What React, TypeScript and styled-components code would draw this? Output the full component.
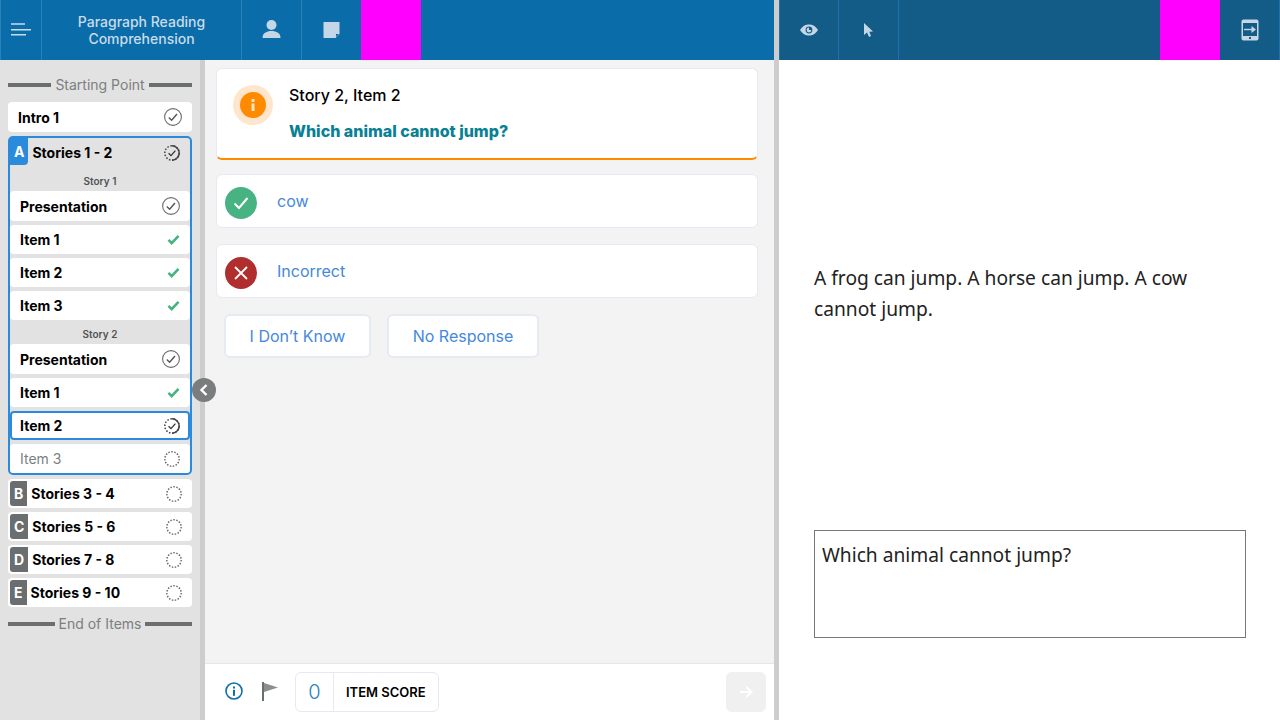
import type { FC, ReactNode } from 'react';
import styled, { createGlobalStyle } from 'styled-components';

const GlobalStyle = createGlobalStyle`
    html, body {
        margin: 0;
        padding: 0;
    }

    body {
        font-family: Inter, "Liberation Sans", sans-serif;
        background: #fff;
    }

    * {
        box-sizing: border-box;
    }
`;

type StatusKind = 'done' | 'check' | 'progress' | 'empty';

const StatusIcon: FC<{ kind: StatusKind }> = ({ kind }) => {
    if (kind === 'check') {
        return (
            <svg width="13" height="11" viewBox="0 0 14 12">
                <path d="M1.5 6.5 L5 10 L12.5 2" fill="none" stroke="#45b380" strokeWidth="2.8" />
            </svg>
        );
    }
    if (kind === 'done') {
        return (
            <svg width="18" height="18" viewBox="0 0 18 18">
                <circle cx="9" cy="9" r="8.4" fill="none" stroke="#6b6e6e" strokeWidth="1.1" />
                <path d="M4.8 9.6 L7.6 12.2 L13 6" fill="none" stroke="#555" strokeWidth="1.4" />
            </svg>
        );
    }
    if (kind === 'progress') {
        return (
            <svg width="16" height="16" viewBox="0 0 16 16">
                <circle cx="8" cy="8" r="7.2" fill="none" stroke="#444" strokeWidth="1.5" strokeDasharray="1.6 1.6" />
                <path d="M8 0.8 A7.2 7.2 0 0 1 8 15.2" fill="none" stroke="#444" strokeWidth="1.5" />
                <path d="M4.6 8.2 L7 10.6 L11.4 5.6" fill="none" stroke="#333" strokeWidth="1.3" />
            </svg>
        );
    }
    return (
        <svg width="16" height="16" viewBox="0 0 16 16">
            <circle cx="8" cy="8" r="7.2" fill="none" stroke="#6b6e6e" strokeWidth="1.5" strokeDasharray="1.5 1.5" />
        </svg>
    );
};

const Page = styled.div`
    display: grid;
    grid-template-columns: 774px 5px 501px;
    width: 1280px;
    height: 720px;
    overflow: hidden;
`;

const LeftPane = styled.div`
    display: flex;
    flex-direction: column;
    height: 720px;
`;

const PaneDivider = styled.div`
    background: #cdcdcd;
`;

const RightPane = styled.div`
    display: flex;
    flex-direction: column;
    height: 720px;
`;

const TopBar = styled.header<{ $dark?: boolean }>`
    display: flex;
    flex: 0 0 60px;
    height: 60px;
    background: ${({ $dark }) => ($dark ? '#135c87' : '#0a6ca8')};
    color: #c5d7e6;
`;

const BarCell = styled.div<{ $width: number; $line: string; $end?: boolean }>`
    display: flex;
    flex: 0 0 ${({ $width }) => $width}px;
    align-items: center;
    justify-content: center;
    border-${({ $end }) => ($end ? 'right' : 'left')}: 1px solid ${({ $line }) => $line};
`;

const BarTitle = styled(BarCell)`
    font-size: 14px;
    font-weight: 500;
    line-height: 17px;
    text-align: center;
    color: #c9dcea;
`;

const Masked = styled.div<{ $width: number }>`
    flex: 0 0 ${({ $width }) => $width}px;
    background: #ff00ff;
`;

const BarSpacer = styled.div`
    flex: 1;
`;

const Body = styled.div`
    position: relative;
    display: grid;
    flex: 1;
    grid-template-columns: 200px 5px 569px;
    min-height: 0;
`;

const Sidebar = styled.nav`
    display: flex;
    flex-direction: column;
    gap: 4px;
    padding: 16px 8px 0;
    background: #e2e2e2;
`;

const Splitter = styled.div`
    background: #cdcdcd;
`;

const Collapse = styled.button`
    position: absolute;
    top: 318px;
    left: 192px;
    display: flex;
    align-items: center;
    justify-content: center;
    width: 24px;
    height: 24px;
    padding: 0;
    border: 0;
    border-radius: 50%;
    background: #7a7d7d;
`;

const Marker = styled.div<{ $spaced?: boolean }>`
    display: flex;
    align-items: center;
    gap: 4px;
    height: 17px;
    margin-bottom: ${({ $spaced }) => ($spaced ? '5px' : '0')};
    margin-top: ${({ $spaced }) => ($spaced ? '0' : '4px')};
    font-size: 14px;
    line-height: 17px;
    white-space: nowrap;
    color: #7b7f80;

    &::before,
    &::after {
        content: '';
        flex: 1;
        height: 4px;
        background: #6b6e6e;
    }
`;

const Row = styled.div<{ $selected?: boolean; $height?: number }>`
    display: flex;
    flex: 0 0 ${({ $height }) => $height ?? 29}px;
    align-items: center;
    justify-content: space-between;
    padding: 0 ${({ $selected }) => ($selected ? '8px' : '10px')};
    border: ${({ $selected }) => ($selected ? '2px solid #2a8adb' : '0')};
    border-radius: 4px;
    background: #fff;
`;

const RowLabel = styled.span<{ $muted?: boolean }>`
    font-size: 14px;
    font-weight: ${({ $muted }) => ($muted ? 400 : 700)};
    color: ${({ $muted }) => ($muted ? '#7b7f80' : '#000')};
`;

const CheckSlot = styled.span`
    display: flex;
    align-items: center;
    justify-content: flex-end;
    width: 20px;
`;

const GroupBox = styled.section`
    display: flex;
    flex-direction: column;
    gap: 4px;
    height: 339px;
    border: 2px solid #2a8adb;
    border-radius: 5px;
`;

const GroupHead = styled.div`
    display: flex;
    flex: 0 0 27px;
    align-items: center;
    padding: 2px 10px 0 0;
`;

const LetterTag = styled.span<{ $active?: boolean }>`
    display: flex;
    flex: 0 0 auto;
    align-items: center;
    justify-content: center;
    height: ${({ $active }) => ($active ? '27px' : '25px')};
    padding: 0 4px;
    margin-left: ${({ $active }) => ($active ? '0' : '2px')};
    margin-top: ${({ $active }) => ($active ? '-2px' : '0')};
    border-radius: ${({ $active }) => ($active ? '0 0 4px 0' : '3px 0 0 3px')};
    background: ${({ $active }) => ($active ? '#2a8adb' : '#6b6e6e')};
    font-size: 14px;
    font-weight: 700;
    color: #fff;
`;

const GroupName = styled.span`
    flex: 1;
    margin-left: 4px;
    font-size: 14px;
    font-weight: 700;
    color: #000;
`;

const GroupRow = styled.div`
    display: flex;
    flex: 0 0 29px;
    align-items: center;
    padding-right: 10px;
    border-radius: 4px;
    background: #fff;
`;

const StoryLabel = styled.div<{ $height: number; $drop: number }>`
    display: flex;
    flex: 0 0 ${({ $height }) => $height}px;
    align-items: center;
    justify-content: center;
    min-height: 0;
    padding-top: ${({ $drop }) => $drop}px;
    font-size: 10px;
    font-weight: 600;
    line-height: 10px;
    color: #505354;
`;

const Main = styled.main`
    display: flex;
    flex-direction: column;
    background: #f3f3f3;
`;

const Content = styled.div`
    display: flex;
    flex: 1;
    flex-direction: column;
    padding: 8px 16px 0 11px;
`;

const QuestionCard = styled.div`
    display: flex;
    gap: 16px;
    height: 92px;
    padding: 16px;
    border: 1px solid #e6e9f3;
    border-bottom: 2px solid #ff8a00;
    border-radius: 6px;
    background: #fff;
`;

const InfoHalo = styled.div`
    display: flex;
    flex: 0 0 40px;
    align-items: center;
    justify-content: center;
    height: 40px;
    border-radius: 50%;
    background: #fee5cc;
`;

const InfoDot = styled.div`
    display: flex;
    align-items: center;
    justify-content: center;
    width: 26px;
    height: 26px;
    border-radius: 50%;
    background: #ff8a00;
`;

const QuestionText = styled.div`
    display: flex;
    flex-direction: column;
    gap: 17px;
`;

const ItemTitle = styled.div`
    margin-top: 1px;
    font-size: 16px;
    font-weight: 500;
    line-height: 19px;
    color: #000;
`;

const Prompt = styled.div`
    font-size: 16px;
    font-weight: 800;
    line-height: 19px;
    color: #098094;
`;

const Answer = styled.div`
    display: flex;
    align-items: center;
    gap: 20px;
    height: 54px;
    margin-top: 14px;
    padding-left: 8px;
    border: 1px solid #e6e9f3;
    border-radius: 6px;
    background: #fff;
    font-size: 16px;
    color: #4488dd;

    & + & {
        margin-top: 16px;
    }
`;

const AnswerBadge = styled.div<{ $tone: string }>`
    display: flex;
    flex: 0 0 32px;
    align-items: center;
    justify-content: center;
    height: 32px;
    margin-top: 4px;
    border-radius: 50%;
    background: ${({ $tone }) => $tone};
`;

const ButtonRow = styled.div`
    display: flex;
    gap: 16px;
    margin-top: 16px;
    padding-left: 8px;
`;

const GhostButton = styled.button<{ $width: number }>`
    width: ${({ $width }) => $width}px;
    height: 44px;
    padding: 0;
    border: 2px solid #e6eaf5;
    border-radius: 6px;
    background: #fff;
    font-family: inherit;
    font-size: 16px;
    color: #4488dd;
`;

const Footer = styled.footer`
    display: flex;
    flex: 0 0 57px;
    align-items: center;
    padding: 0 8px 0 19px;
    border-top: 1px solid #e6e6e6;
    background: #fff;
`;

const InfoSlot = styled.span`
    display: flex;
    margin-bottom: 2px;
`;

const FlagSlot = styled.span`
    display: flex;
    margin-left: 18px;
    margin-bottom: 2px;
`;

const ScoreBox = styled.div`
    display: flex;
    align-items: center;
    height: 40px;
    margin-left: 17px;
    border: 1px solid #e6e9f3;
    border-radius: 6px;
`;

const ScoreValue = styled.span`
    display: flex;
    align-items: center;
    justify-content: center;
    width: 38px;
    height: 100%;
    border-right: 1px solid #e6e9f3;
    font-size: 20px;
    font-weight: 300;
    color: #2a7fc4;
`;

const ScoreLabel = styled.span`
    padding: 0 12px;
    font-size: 13px;
    font-weight: 600;
    color: #000;
`;

const NextButton = styled.button`
    display: flex;
    align-items: center;
    justify-content: center;
    width: 40px;
    height: 40px;
    margin-left: auto;
    padding: 0;
    border: 0;
    border-radius: 6px;
    background: #f0f0f0;
`;

const Reader = styled.div`
    display: flex;
    flex: 1;
    flex-direction: column;
    padding: 202px 34px 82px 35px;
    background: #fff;
    font-family: "Noto Sans", sans-serif;
    font-size: 19.2px;
    line-height: 31px;
    color: #222;
`;

const Passage = styled.p`
    flex: 1;
    margin: 0;
`;

const QuestionBox = styled.div`
    height: 108px;
    padding: 8px 7px;
    border: 1px solid #777;
`;

const items: { label: string; kind: StatusKind }[] = [
    { label: 'Item 1', kind: 'check' },
    { label: 'Item 2', kind: 'check' },
    { label: 'Item 3', kind: 'check' },
];

const groups = [
    { letter: 'B', name: 'Stories 3 - 4' },
    { letter: 'C', name: 'Stories 5 - 6' },
    { letter: 'D', name: 'Stories 7 - 8' },
    { letter: 'E', name: 'Stories 9 - 10' },
];

const SideRow: FC<{ label: string; kind: StatusKind; height?: number; selected?: boolean; muted?: boolean }> = ({
    label,
    kind,
    height,
    selected,
    muted,
}) => (
    <Row $height={height} $selected={selected}>
        <RowLabel $muted={muted}>{label}</RowLabel>
        <CheckSlot>
            <StatusIcon kind={kind} />
        </CheckSlot>
    </Row>
);

const BarIcon: FC<{ children: ReactNode }> = ({ children }) => (
    <svg width="24" height="24" viewBox="0 0 24 24">
        {children}
    </svg>
);

export default function App() {
    return (
        <Page>
            <GlobalStyle />
            <LeftPane>
                <TopBar>
                    <BarCell $width={41} $line="#2b80b6">
                        <svg width="20" height="14" viewBox="0 0 20 14">
                            <path d="M0 1 H14 M0 6.8 H20 M0 11.8 H15" stroke="#c9dcea" strokeWidth="1.6" />
                        </svg>
                    </BarCell>
                    <BarTitle $width={200} $line="#2b80b6">
                        Paragraph Reading
                        <br />
                        Comprehension
                    </BarTitle>
                    <BarCell $width={60} $line="#2b80b6">
                        <BarIcon>
                            <circle cx="11.5" cy="7" r="5" fill="#c5d7e6" />
                            <path d="M2.5 20 C2.5 15 6.5 13 11.5 13 C16.5 13 20.5 15 20.5 20 Z" fill="#c5d7e6" />
                        </BarIcon>
                    </BarCell>
                    <BarCell $width={60} $line="#2b80b6">
                        <BarIcon>
                            <path d="M3.5 4 H19.5 V16 L15.5 20 H3.5 Z" fill="#c5d7e6" />
                            <path d="M16 19 L19 16 H16 Z" fill="#0a6ca8" />
                        </BarIcon>
                    </BarCell>
                    <Masked $width={60} />
                </TopBar>
                <Body>
                    <Sidebar>
                        <Marker $spaced>Starting Point</Marker>
                        <SideRow label="Intro 1" kind="done" height={30} />
                        <GroupBox>
                            <GroupHead>
                                <LetterTag $active>A</LetterTag>
                                <GroupName>Stories 1 - 2</GroupName>
                                <CheckSlot>
                                    <StatusIcon kind="progress" />
                                </CheckSlot>
                            </GroupHead>
                            <StoryLabel $height={18} $drop={5}>
                                Story 1
                            </StoryLabel>
                            <SideRow label="Presentation" kind="done" height={30} />
                            {items.map((item) => (
                                <SideRow key={item.label} label={item.label} kind={item.kind} />
                            ))}
                            <StoryLabel $height={16} $drop={3}>
                                Story 2
                            </StoryLabel>
                            <SideRow label="Presentation" kind="done" height={30} />
                            <SideRow label="Item 1" kind="check" />
                            <SideRow label="Item 2" kind="progress" selected />
                            <SideRow label="Item 3" kind="empty" muted />
                        </GroupBox>
                        {groups.map((group) => (
                            <GroupRow key={group.letter}>
                                <LetterTag>{group.letter}</LetterTag>
                                <GroupName>{group.name}</GroupName>
                                <CheckSlot>
                                    <StatusIcon kind="empty" />
                                </CheckSlot>
                            </GroupRow>
                        ))}
                        <Marker>End of Items</Marker>
                    </Sidebar>
                    <Splitter />
                    <Collapse aria-label="Collapse">
                        <svg width="10" height="12" viewBox="0 0 10 12">
                            <path d="M7.5 1 L2.5 6 L7.5 11" fill="none" stroke="#fff" strokeWidth="2.4" />
                        </svg>
                    </Collapse>
                    <Main>
                        <Content>
                            <QuestionCard>
                                <InfoHalo>
                                    <InfoDot>
                                        <svg width="6" height="14" viewBox="0 0 6 14">
                                            <rect x="1.5" y="1" width="3" height="3" fill="#ffe3c2" />
                                            <rect x="1.5" y="5.5" width="3" height="7.5" fill="#ffe3c2" />
                                        </svg>
                                    </InfoDot>
                                </InfoHalo>
                                <QuestionText>
                                    <ItemTitle>Story 2, Item 2</ItemTitle>
                                    <Prompt>Which animal cannot jump?</Prompt>
                                </QuestionText>
                            </QuestionCard>
                            <Answer>
                                <AnswerBadge $tone="#47b282">
                                    <svg width="16" height="14" viewBox="0 0 16 14">
                                        <path d="M1.5 7.5 L6 12 L14.5 2" fill="none" stroke="#fff" strokeWidth="2" />
                                    </svg>
                                </AnswerBadge>
                                cow
                            </Answer>
                            <Answer>
                                <AnswerBadge $tone="#b02e2e">
                                    <svg width="14" height="14" viewBox="0 0 14 14">
                                        <path d="M1 1 L13 13 M13 1 L1 13" stroke="#fff" strokeWidth="1.8" />
                                    </svg>
                                </AnswerBadge>
                                Incorrect
                            </Answer>
                            <ButtonRow>
                                <GhostButton $width={147}>I Don’t Know</GhostButton>
                                <GhostButton $width={152}>No Response</GhostButton>
                            </ButtonRow>
                        </Content>
                        <Footer>
                            <InfoSlot>
                                <svg width="20" height="20" viewBox="0 0 20 20">
                                    <circle cx="10" cy="10" r="8" fill="none" stroke="#0f6fa8" strokeWidth="1.6" />
                                    <rect x="9" y="5.5" width="2" height="2" fill="#0f6fa8" />
                                    <rect x="9" y="8.8" width="2" height="6" fill="#0f6fa8" />
                                </svg>
                            </InfoSlot>
                            <FlagSlot>
                                <svg width="16" height="19" viewBox="0 0 16 19">
                                    <rect x="0" y="0" width="2" height="19" fill="#6b6e6e" />
                                    <path d="M2 1 L16 5.5 L2 10 Z" fill="#8c8f8f" />
                                </svg>
                            </FlagSlot>
                            <ScoreBox>
                                <ScoreValue>0</ScoreValue>
                                <ScoreLabel>ITEM SCORE</ScoreLabel>
                            </ScoreBox>
                            <NextButton aria-label="Next">
                                <svg width="14" height="14" viewBox="0 0 14 14">
                                    <path d="M1 7 H12 M7.5 2 L12.5 7 L7.5 12" fill="none" stroke="#fff" strokeWidth="2" />
                                </svg>
                            </NextButton>
                        </Footer>
                    </Main>
                </Body>
            </LeftPane>
            <PaneDivider />
            <RightPane>
                <TopBar $dark>
                    <BarCell $width={59} $line="#1d72a8">
                        <svg width="20" height="12" viewBox="0 0 20 12">
                            <path d="M1 6 C4 1.5 7 0.5 10 0.5 C13 0.5 16 1.5 19 6 C16 10.5 13 11.5 10 11.5 C7 11.5 4 10.5 1 6 Z" fill="#c5d7e6" />
                            <circle cx="10" cy="6" r="3.4" fill="#135c87" />
                            <path d="M10 3.6 A2.4 2.4 0 1 0 12.4 6 L10 6 Z" fill="#c5d7e6" />
                        </svg>
                    </BarCell>
                    <BarCell $width={60} $line="#1d72a8">
                        <svg width="12" height="16" viewBox="0 0 12 16">
                            <path d="M1 1 L1 13 L4 10.5 L6 15 L8 14 L6.3 9.8 L10 9.5 Z" fill="#c5d7e6" />
                        </svg>
                    </BarCell>
                    <BarCell $width={1} $line="#1d72a8" />
                    <BarSpacer />
                    <Masked $width={60} />
                    <BarCell $width={60} $line="#1d72a8" $end>
                        <svg width="18" height="22" viewBox="0 0 18 22">
                            <rect x="0.5" y="0.5" width="17" height="21" rx="2" fill="#c5d7e6" />
                            <rect x="2" y="4" width="14" height="13" fill="#135c87" />
                            <path d="M3 10.5 H11" stroke="#c5d7e6" strokeWidth="1.4" />
                            <path d="M10.5 7 L15 10.5 L10.5 14 Z" fill="#c5d7e6" />
                            <rect x="8" y="18" width="2" height="2" fill="#135c87" />
                        </svg>
                    </BarCell>
                </TopBar>
                <Reader>
                    <Passage>A frog can jump. A horse can jump. A cow cannot jump.</Passage>
                    <QuestionBox>Which animal cannot jump?</QuestionBox>
                </Reader>
            </RightPane>
        </Page>
    );
}
